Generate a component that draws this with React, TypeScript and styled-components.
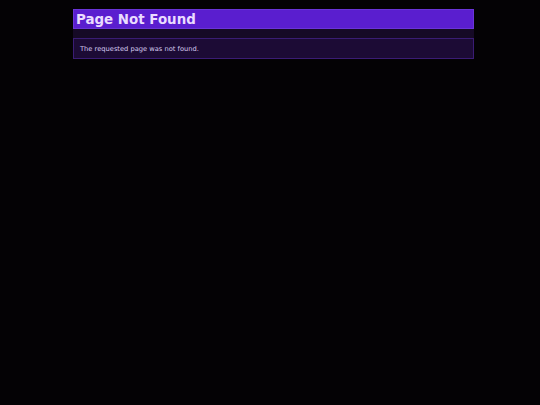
import styled, { createGlobalStyle } from "styled-components";

const GlobalStyle = createGlobalStyle`
  html, body {
    margin: 0;
    padding: 0;
    background: #040205;
    font-family: "DejaVu Sans", sans-serif;
  }
`;

const Page = styled.div`
  padding: 9px 0 0 73px;
  min-height: 405px;
  box-sizing: border-box;
`;

const Panel = styled.section`
  width: 401px;
  background: #160a26;
`;

const Title = styled.h1`
  margin: 0;
  height: 20px;
  padding: 0 2px;
  background: #5a1ecf;
  border: 1px solid #6a34d8;
  box-sizing: border-box;
  color: #eadcff;
  font-size: 13.4px;
  font-weight: bold;
  line-height: 19px;
`;

const Message = styled.div`
  margin-top: 9px;
  height: 21px;
  padding: 0 6px;
  background: #1c0b35;
  border: 1px solid #3a1c74;
  box-sizing: border-box;
  color: #d6caf0;
  font-size: 6.7px;
  line-height: 21px;
`;

export default function App() {
  return (
    <>
      <GlobalStyle />
      <Page>
        <Panel>
          <Title>Page Not Found</Title>
          <Message>The requested page was not found.</Message>
        </Panel>
      </Page>
    </>
  );
}
